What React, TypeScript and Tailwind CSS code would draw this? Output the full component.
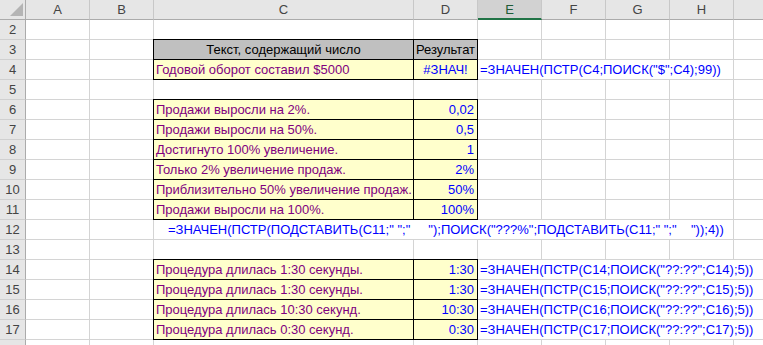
import type { ReactNode } from "react";

type Tone = "label" | "value" | "formula" | "head";

type CellDef = {
  span?: number;
  text?: string;
  tone?: Tone;
  align?: "left" | "right" | "center";
  framed?: "head" | "data";
  indent?: boolean;
};

const columns = ["A", "B", "C", "D", "E", "F", "G", "H", "I"];

const toneClass: Record<Tone, string> = {
  label: "text-[#800080]",
  value: "text-[#0000ff]",
  formula: "text-[#0000ff]",
  head: "text-black",
};

const spanClass: Record<number, string> = {
  1: "col-span-1",
  4: "col-span-4",
  5: "col-span-5",
  6: "col-span-6",
};

const labelRow = (label: string, value: string): CellDef[] => [
  {},
  {},
  { text: label, tone: "label", framed: "data" },
  { text: value, tone: "value", align: "right", framed: "data" },
];

const timeRow = (n: number, label: string, value: string): CellDef[] => [
  ...labelRow(label, value),
  {
    span: 5,
    tone: "formula",
    text: `=ЗНАЧЕН(ПСТР(C${n};ПОИСК("??:??";C${n});5))`,
  },
];

// sparse sheet: missing trailing cells are filled with blanks
const rows: { n: number; cells: CellDef[] }[] = [
  { n: 2, cells: [] },
  {
    n: 3,
    cells: [
      {},
      {},
      { text: "Текст, содержащий число", tone: "head", align: "center", framed: "head" },
      { text: "Результат", tone: "head", align: "center", framed: "head" },
    ],
  },
  {
    n: 4,
    cells: [
      {},
      {},
      { text: "Годовой оборот составил $5000", tone: "label", framed: "data" },
      { text: "#ЗНАЧ!", tone: "value", align: "center", framed: "data" },
      { span: 4, tone: "formula", text: '=ЗНАЧЕН(ПСТР(C4;ПОИСК("$";C4);99))' },
    ],
  },
  { n: 5, cells: [] },
  { n: 6, cells: labelRow("Продажи выросли на 2%.", "0,02") },
  { n: 7, cells: labelRow("Продажи выросли на 50%.", "0,5") },
  { n: 8, cells: labelRow("Достигнуто 100% увеличение.", "1") },
  { n: 9, cells: labelRow("Только 2% увеличение продаж.", "2%") },
  { n: 10, cells: labelRow("Приблизительно 50% увеличение продаж.", "50%") },
  { n: 11, cells: labelRow("Продажи выросли на 100%.", "100%") },
  {
    n: 12,
    cells: [
      {},
      {},
      {
        span: 6,
        tone: "formula",
        indent: true,
        text: '=ЗНАЧЕН(ПСТР(ПОДСТАВИТЬ(C11;" ";"     ");ПОИСК("???%";ПОДСТАВИТЬ(C11;" ";"    "));4))',
      },
    ],
  },
  { n: 13, cells: [] },
  { n: 14, cells: timeRow(14, "Процедура длилась 1:30 секунды.", "1:30") },
  { n: 15, cells: timeRow(15, "Процедура длилась 1:30 секунды.", "1:30") },
  { n: 16, cells: timeRow(16, "Процедура длилась 10:30 секунд.", "10:30") },
  { n: 17, cells: timeRow(17, "Процедура длилась 0:30 секунд.", "0:30") },
  { n: 18, cells: [] },
];

function fill(cells: CellDef[]): CellDef[] {
  const out = [...cells];
  let used = out.reduce((sum, c) => sum + (c.span ?? 1), 0);
  while (used < columns.length) {
    out.push({});
    used += 1;
  }
  return out;
}

function Cell({ def }: { def: CellDef }) {
  const align =
    def.align === "right"
      ? "justify-end pr-[3px]"
      : def.align === "center"
        ? "justify-center"
        : def.indent
          ? "pl-[14px]"
          : "pl-[2px]";

  const frame =
    def.framed === "head"
      ? "-ml-px -mt-px border border-black bg-[#c0c0c0]"
      : def.framed === "data"
        ? "-ml-px -mt-px border border-black bg-[#ffffcc]"
        : "border-b border-r border-[#d4d4d4] bg-white";

  return (
    <div
      className={`flex items-center overflow-hidden whitespace-pre ${spanClass[def.span ?? 1]} ${frame} ${align} ${def.tone ? toneClass[def.tone] : ""}`}
    >
      {def.text}
    </div>
  );
}

function HeaderCell({ children, selected }: { children?: ReactNode; selected?: boolean }) {
  return (
    <div
      className={`flex items-center justify-center border-r border-[#c8c8c8] ${
        selected
          ? "border-b-2 border-b-[#217346] bg-[#d2d2d2] text-[#1e5c38]"
          : "border-b border-b-[#ababab] bg-[#e6e6e6] text-[#444]"
      }`}
    >
      {children}
    </div>
  );
}

export default function App() {
  return (
    <div className="h-[345px] w-[763px] overflow-hidden bg-white font-['Liberation_Sans',Arial,sans-serif] text-[13px] leading-none">
      <div className="grid w-[798px] grid-cols-[26px_64px_64px_260px_64px_64px_64px_64px_64px_64px] auto-rows-[20px]">
        {/* corner with select-all triangle */}
        <div className="flex items-end justify-end border-b border-r border-[#ababab] bg-[#e6e6e6] pb-[3px] pr-[2px]">
          <svg width="13" height="13" viewBox="0 0 13 13">
            <polygon points="13,0 13,13 0,13" fill="#b4b4b4" />
          </svg>
        </div>
        {columns.map((c) => (
          // column I sits past the window edge, its letter is out of view
          <HeaderCell key={c} selected={c === "E"}>
            {c === "I" ? null : c}
          </HeaderCell>
        ))}

        {rows.map((row) => (
          <RowCells key={row.n} n={row.n} cells={fill(row.cells)} />
        ))}
      </div>
    </div>
  );
}

function RowCells({ n, cells }: { n: number; cells: CellDef[] }) {
  return (
    <>
      <div className="flex items-center justify-center border-b border-r border-b-[#d0d0d0] border-r-[#ababab] bg-[#e6e6e6] text-[#444]">
        {n < 18 ? n : null}
      </div>
      {cells.map((def, i) => (
        <Cell key={i} def={def} />
      ))}
    </>
  );
}
